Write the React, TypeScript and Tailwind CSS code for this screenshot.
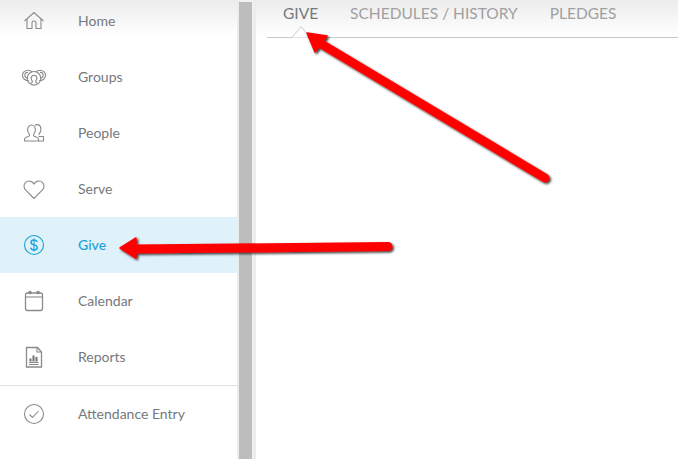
import type { ReactNode } from 'react';

interface NavItem {
  label: string;
  icon: ReactNode;
  active?: boolean;
}

const navItems: NavItem[] = [
  {
    label: 'Home',
    icon: (
      <>
        <path d="M2.500 12 12 3.500 21.500 12" />
        <path d="M5 10v9.500h5v-5.500a2 2 0 0 1 4 0v5.500h5V10" />
      </>
    ),
  },
  {
    label: 'Groups',
    icon: (
      <>
        <path d="M7 15.800C3.200 15.800.5 13.500.5 10.500.5 7.500 3 5.200 6 5.200c1.800 0 3.300.8 4.200 2" />
        <path d="M17 15.800c3.800 0 6.500-2.300 6.500-5.300 0-3-2.500-5.300-5.500-5.300-1.800 0-3.300.8-4.200 2" />
        <path d="M5.500 13.300c-1.500-.4-2.700-1.500-2.700-3 0-1.700 1.500-2.900 3.200-2.900" />
        <path d="M18.500 13.300c1.500-.4 2.700-1.500 2.700-3 0-1.700-1.500-2.900-3.200-2.900" />
        <circle cx="12" cy="13.300" r="6.800" />
        <path d="M8.500 18.500c1.400-.7 2-1.300 1.900-2.300-.7-.7-1.200-1.700-1.200-2.900 0-1.800 1.100-3.100 2.800-3.100s2.800 1.300 2.800 3.100c0 1.200-.5 2.200-1.200 2.900-.1 1 .5 1.600 1.900 2.300" />
      </>
    ),
  },
  {
    label: 'People',
    icon: (
      <>
        <path d="M2.500 20v-2c0-1.500 4.500-2.500 5-3.500.2-.6 0-1.200-.6-2-.8-1-1.300-2.300-1.300-3.700C5.600 6 7.300 4 9.500 4s3.900 2 3.900 4.800c0 1.400-.5 2.700-1.300 3.700-.6.800-.8 1.400-.6 2 .5 1 5 2 5 3.500v2Z" />
        <path d="M13 4.200c.6-.4 1.300-.6 2-.6 2.200 0 3.900 2 3.900 4.800 0 1.400-.5 2.700-1.300 3.700-.6.800-.8 1.400-.6 2" />
        <path d="M16.500 15.500h5v4.500h-5" />
      </>
    ),
  },
  {
    label: 'Serve',
    icon: (
      <path d="M12 21.500 3.800 13.200C2.600 12 2 10.600 2 9.200 2 6.300 4.200 4 7 4c2 0 3.800 1 5 3 1.200-2 3-3 5-3 2.800 0 5 2.300 5 5.200 0 1.400-.6 2.800-1.800 4Z" />
    ),
  },
  {
    label: 'Give',
    active: true,
    icon: (
      <>
        <circle cx="12" cy="12" r="9.500" />
        <path d="M15 9c-.3-1.300-1.500-2-3-2-1.700 0-3 .9-3 2.400 0 3.300 6.200 1.700 6.200 5.100 0 1.600-1.400 2.500-3.200 2.500-1.700 0-3-.8-3.300-2.300" strokeWidth="1.400" />
        <path d="M12 5.500v13" />
      </>
    ),
  },
  {
    label: 'Calendar',
    icon: (
      <>
        <rect x="3.500" y="4" width="17" height="17.500" rx="2" strokeWidth="1.300" />
        <path d="M3.500 8h17" />
        <circle cx="8" cy="3.500" r="1.300" fill="#8a8a8a" />
        <circle cx="16" cy="3.500" r="1.300" fill="#8a8a8a" />
      </>
    ),
  },
  {
    label: 'Reports',
    icon: (
      <>
        <path d="M4.500 2.500h11l4 4.500v15h-15Z" strokeWidth="1.300" />
        <path d="M15 2.500V7h4.500" />
        <path d="M8.500 13.500v3M11.500 10.500v6M14.500 12v4.500" strokeWidth="2" stroke="#6f6f6f" />
        <path d="M7 17.500h9.500M7 19.500h9.500" />
      </>
    ),
  },
];

function NavRow({ item }: { item: NavItem }) {
  return (
    <div
      className={`flex h-14 items-center gap-8 pl-[22px] text-[14px] ${
        item.active ? 'bg-[#dff1f9] font-medium text-[#1ba1dc]' : 'text-[#75797e]'
      }`}
    >
      <svg
        viewBox="0 0 24 24"
        fill="none"
        stroke={item.active ? '#1ba1dc' : '#8a8a8a'}
        strokeWidth="1.100"
        className="h-6 w-6 shrink-0"
      >
        {item.icon}
      </svg>
      <span className="pb-[2px]">{item.label}</span>
    </div>
  );
}

export default function App() {
  return (
    <div className="relative flex h-[459px] w-full overflow-hidden bg-white font-['Lato',sans-serif]">
      {/* Sidebar */}
      <aside className="w-[237px] shrink-0 bg-[linear-gradient(#ececec,#ffffff_36px)]">
        <div className="-mt-[7px]">
          {navItems.map((item) => (
            <NavRow key={item.label} item={item} />
          ))}
        </div>
        <div className="border-t border-[#e1e1e1]">
          <NavRow
            item={{
              label: 'Attendance Entry',
              icon: (
                <>
                  <circle cx="12" cy="12" r="9.500" />
                  <path d="m7.500 12.500 3 3 6-6.500" />
                </>
              ),
            }}
          />
        </div>
      </aside>

      {/* Scrollbar */}
      <div className="w-[19px] shrink-0 border-x-2 border-[#ececec] bg-[#f1f1f1] pr-[2px] pt-[2px]">
        <div className="h-full w-[13px] bg-[#bdbdbd]" />
      </div>

      {/* Main */}
      <main className="min-w-0 flex-1 bg-[linear-gradient(#ececec,#ffffff_36px)] pl-[11px]">
        <div className="relative flex h-[38px] gap-8 border-b border-[#c9c9c9] pl-4 pt-[3px] text-[15.5px] leading-5 text-[#a0a0a0]">
          <span className="text-[#74777b]">GIVE</span>
          <span>SCHEDULES / HISTORY</span>
          <span>PLEDGES</span>
          <svg viewBox="0 0 20 13" className="absolute bottom-[-1px] left-[24px] h-[13px] w-5" fill="#ffffff" stroke="#c9c9c9">
            <path d="M0 12.500h1L10 1.500l9 11h1" />
          </svg>
        </div>
      </main>

      {/* Annotation arrows */}
      <svg viewBox="0 0 678 459" className="pointer-events-none absolute inset-0 h-[459px] w-[678px]">
        <defs>
          <filter id="arrow-shadow" x="-10%" y="-10%" width="120%" height="130%">
            <feDropShadow dx="1.500" dy="1.500" stdDeviation="1" floodColor="#000000" floodOpacity="0.800" />
          </filter>
        </defs>
        <g filter="url(#arrow-shadow)" fill="#ff0000" stroke="#ff0000" strokeLinejoin="round">
          <path d="M318 42 545 178" strokeWidth="9" strokeLinecap="round" />
          <path d="M307 33 327 36 315 52Z" strokeWidth="1.500" />
        </g>
        <g filter="url(#arrow-shadow)" fill="#ff0000" stroke="#ff0000" strokeLinejoin="round">
          <path d="M134 249 388 246.500" strokeWidth="9" strokeLinecap="round" />
          <path d="M120 248 136 238 136 258Z" strokeWidth="1.500" />
        </g>
      </svg>
    </div>
  );
}
